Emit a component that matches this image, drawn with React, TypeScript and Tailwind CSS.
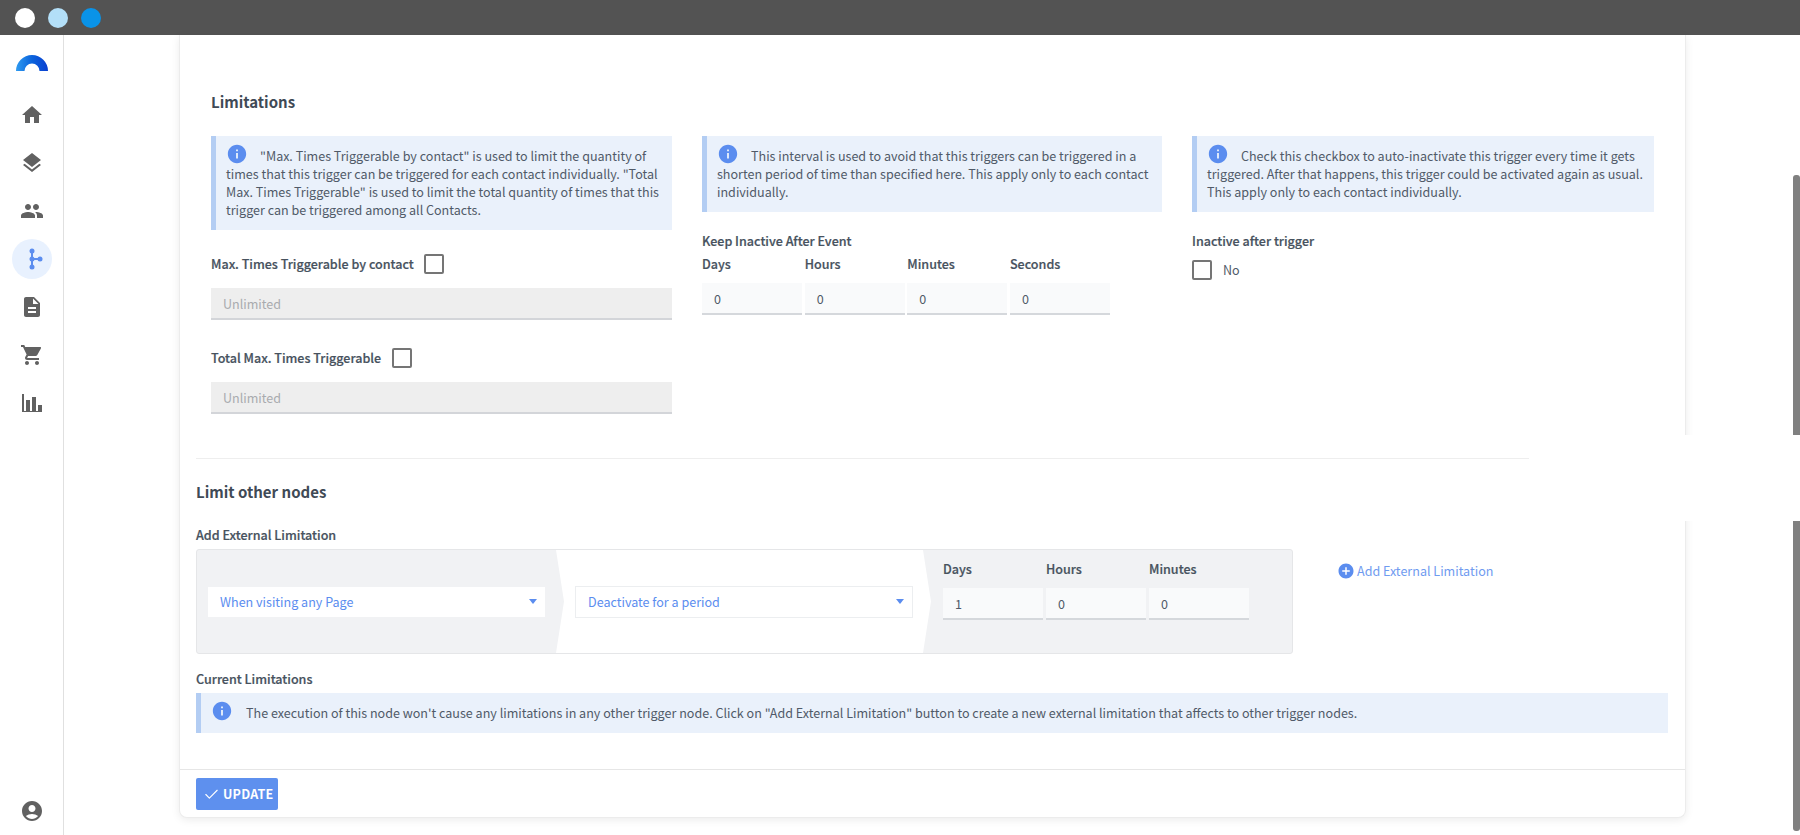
import { MdHome, MdLayers, MdPeople, MdDescription, MdShoppingCart, MdAccountCircle, MdInfo, MdAddCircle } from "react-icons/md";
import { Check as CheckIcon } from "lucide-react";
import type { ReactNode } from "react";

const font = "font-['Noto_Sans_CJK_JP',sans-serif]";

function Logo() {
  return (
    <svg width="32" height="16" viewBox="0 0 32 16" className="block">
      <defs>
        <linearGradient id="logoGrad" x1="0" x2="1" y1="0" y2="0">
          <stop offset="0" stopColor="#2f9bf0" />
          <stop offset="0.5" stopColor="#0b63dc" />
          <stop offset="1" stopColor="#0a3fd0" />
        </linearGradient>
      </defs>
      <path d="M0 16 A16 16 0 0 1 32 16 L23.5 16 A7.5 7.5 0 0 0 8.5 16 Z" fill="url(#logoGrad)" />
    </svg>
  );
}

function TreeIcon() {
  return (
    <svg width="24" height="24" viewBox="0 0 24 24" fill="#5b8def">
      <circle cx="12" cy="4" r="2.5" />
      <circle cx="12" cy="12" r="2.5" />
      <circle cx="12" cy="20" r="2.5" />
      <circle cx="20" cy="12" r="2.5" />
      <rect x="11" y="4" width="2" height="16" />
      <rect x="12" y="11" width="8" height="2" />
    </svg>
  );
}

function ChartIcon() {
  return (
    <svg width="24" height="24" viewBox="0 0 24 24" fill="#616161">
      <rect x="2" y="3" width="2" height="18" />
      <rect x="6" y="9" width="4" height="12" />
      <rect x="12" y="6" width="4" height="15" />
      <rect x="18" y="14" width="4" height="7" />
      <rect x="2" y="20" width="20" height="1" />
    </svg>
  );
}

function NavItem({ children, active }: { children: ReactNode; active?: boolean }) {
  return (
    <div className={active ? "w-10 h-10 rounded-full bg-[#e8f1fe] flex items-center justify-center" : "w-10 h-10 flex items-center justify-center text-[#616161]"}>
      {children}
    </div>
  );
}

function InfoBox({ children }: { children: ReactNode }) {
  return (
    <div className="bg-[#eaf1fb] border-l-[5px] border-[#b3cdf3] pl-[10px] pr-2 py-[11px] text-[12.55px] leading-[18px] text-[#505a68]">
      {children}
    </div>
  );
}

function InlineInfo() {
  return <MdInfo size={22} className="inline-block text-[#5b8def] mr-[12px] -my-[4px] align-baseline" />;
}

function Check() {
  return <span className="block w-5 h-5 border-2 border-[#757575] rounded-[2px] bg-white shrink-0" />;
}

function FieldInput({ value }: { value: string }) {
  return (
    <div className="h-8 w-[100px] bg-[#f9fafb] border-b-2 border-[#d5d8dc] pl-3 text-[12.55px] leading-[31px] text-[#505a68]">
      {value}
    </div>
  );
}

function DisabledInput() {
  return (
    <div className="h-8 mt-[14px] bg-[#eeeeee] border-b-2 border-[#d3d5d9] pl-3 text-[12.55px] leading-[32px] text-[#a9abae]">
      Unlimited
    </div>
  );
}

function Select({ label, className }: { label: string; className: string }) {
  return (
    <div className={`flex items-center justify-between bg-white pl-3 pr-[8px] text-[12.55px] text-[#5b8def] ${className}`}>
      <span className="pt-px">{label}</span>
      <span className="w-0 h-0 border-x-[4.5px] border-x-transparent border-t-[5px] border-t-[#5b8def]" />
    </div>
  );
}

const labelCls = "text-[12.55px] leading-5 font-medium text-[#47525e] [-webkit-text-stroke:0.2px_#47525e]";

export default function App() {
  return (
    <div className={`relative h-[835px] w-[1800px] overflow-hidden flex flex-col bg-white ${font}`}>
      <div className="h-[35px] shrink-0 bg-[#535353] flex items-center pl-[15px] gap-[13px]">
        <span className="w-5 h-5 rounded-full bg-white" />
        <span className="w-5 h-5 rounded-full bg-[#b3dff8]" />
        <span className="w-5 h-5 rounded-full bg-[#0a93e8]" />
      </div>

      <div className="flex flex-1 min-h-0">
        <aside className="w-[64px] shrink-0 border-r border-[#e0e0e0] flex flex-col items-center pt-5 pb-1">
          <Logo />
          <div className="flex flex-col items-center gap-2 mt-[24px]">
            <NavItem><MdHome size={24} /></NavItem>
            <NavItem><MdLayers size={24} /></NavItem>
            <NavItem><MdPeople size={24} /></NavItem>
            <NavItem active><TreeIcon /></NavItem>
            <NavItem><MdDescription size={24} /></NavItem>
            <NavItem><MdShoppingCart size={24} /></NavItem>
            <NavItem><ChartIcon /></NavItem>
          </div>
          <div className="mt-auto"><NavItem><MdAccountCircle size={24} /></NavItem></div>
        </aside>

        <main className="flex-1 min-w-0 pl-[115px]">
          <div className="w-[1507px] h-[783px] bg-white border-x border-b border-[#ececec] rounded-b-lg shadow-[0_2px_8px_rgba(0,0,0,0.08)]">
            <section className="pl-[31px] pr-[30px] pt-[55px] h-[423px]">
              <h2 className="text-[15px] leading-6 font-bold text-[#3f4a56]">Limitations</h2>
              <div className="grid grid-cols-[461px_460px_462px] gap-x-[30px] mt-[22px]">
                <div>
                  <InfoBox>
                    <InlineInfo />"Max. Times Triggerable by contact" is used to limit the quantity of times that this trigger can be triggered for each contact individually. "Total Max. Times Triggerable" is used to limit the total quantity of times that this trigger can be triggered among all Contacts.
                  </InfoBox>
                  <div className="flex items-center gap-[10px] mt-[24px]">
                    <span className={labelCls}>Max. Times Triggerable by contact</span>
                    <Check />
                  </div>
                  <DisabledInput />
                  <div className="flex items-center gap-[11px] mt-[28px]">
                    <span className={labelCls}>Total Max. Times Triggerable</span>
                    <Check />
                  </div>
                  <DisabledInput />
                </div>

                <div>
                  <InfoBox>
                    <InlineInfo />This interval is used to avoid that this triggers can be triggered in a shorten period of time than specified here. This apply only to each contact individually.
                  </InfoBox>
                  <div className={`${labelCls} mt-[19px]`}>Keep Inactive After Event</div>
                  <div className="grid grid-cols-[100px_100px_100px_100px] gap-x-[2.67px] mt-[3px]">
                    {["Days", "Hours", "Minutes", "Seconds"].map((l) => (
                      <div key={l}>
                        <div className={labelCls}>{l}</div>
                        <div className="mt-[9px]"><FieldInput value="0" /></div>
                      </div>
                    ))}
                  </div>
                </div>

                <div>
                  <InfoBox>
                    <InlineInfo />Check this checkbox to auto-inactivate this trigger every time it gets triggered. After that happens, this trigger could be activated again as usual. This apply only to each contact individually.
                  </InfoBox>
                  <div className={`${labelCls} mt-[19px]`}>Inactive after trigger</div>
                  <div className="flex items-center gap-[11px] mt-2 text-[12.55px] leading-5 text-[#505a68]">
                    <Check />
                    <span className="pt-px">No</span>
                  </div>
                </div>
              </div>
            </section>

            <div className="h-px w-[1333px] ml-4 bg-[#eeeeee]" />

            <section className="pl-4 pr-4">
              <h2 className="text-[15px] leading-6 font-bold text-[#3f4a56] mt-[21px]">Limit other nodes</h2>
              <div className={`${labelCls} mt-[21px]`}>Add External Limitation</div>
              <div className="flex items-start mt-1">
                <div className="w-[1097px] h-[105px] shrink-0 flex bg-[#f1f2f4] border border-[#e5e6e8] rounded-[3px]">
                  <div className="w-[359px] flex items-center pl-[11px]">
                    <Select label="When visiting any Page" className="w-[337px] h-[30px]" />
                  </div>
                  <div className="w-[375px] bg-white flex items-center pl-[19px] [clip-path:polygon(0_0,8px_50%,0_100%,367px_100%,375px_50%,367px_0)]">
                    <Select label="Deactivate for a period" className="w-[338px] h-8 border border-[#eceef0]" />
                  </div>
                  <div className="flex gap-[3px] pl-3 pt-[9px]">
                    {[["Days", "1"], ["Hours", "0"], ["Minutes", "0"]].map(([l, v]) => (
                      <div key={l}>
                        <div className={labelCls}>{l}</div>
                        <div className="mt-[9px]"><FieldInput value={v} /></div>
                      </div>
                    ))}
                  </div>
                </div>
                <div className="flex items-center gap-[2px] ml-[44px] mt-[12px] leading-5 text-[12.55px] text-[#6f9bf0]">
                  <MdAddCircle size={18} className="text-[#5b8def]" />
                  <span>Add External Limitation</span>
                </div>
              </div>
              <div className={`${labelCls} mt-[15px]`}>Current Limitations</div>
              <div className="mt-1 w-[1472px] h-10 flex items-center bg-[#eaf1fb] border-l-[5px] border-[#b3cdf3] pl-[10px] text-[12.55px] text-[#505a68]">
                <MdInfo size={22} className="text-[#5b8def] mr-[13px] -mt-1 shrink-0" />
                <span>The execution of this node won't cause any limitations in any other trigger node. Click on "Add External Limitation" button to create a new external limitation that affects to other trigger nodes.</span>
              </div>
            </section>

            <div className="mt-9 border-t border-[#e6e6e6] pl-4 pt-2">
              <button className="h-8 w-[82px] rounded-[2px] bg-[#5e90ee] text-white text-[12.55px] font-bold tracking-[0.2px] flex items-center pl-[7px] gap-[3px]">
                <CheckIcon size={17} strokeWidth={1.6} />
                UPDATE
              </button>
            </div>
          </div>
        </main>
      </div>

      {/* scrollbar, cut by the white band below */}
      <div className="absolute right-0 top-[175px] w-[7px] h-[656px] bg-[#808080] rounded-[3px]" />
      <div className="absolute left-[1531px] right-0 top-[435px] h-[86px] bg-white z-10" />
    </div>
  );
}
